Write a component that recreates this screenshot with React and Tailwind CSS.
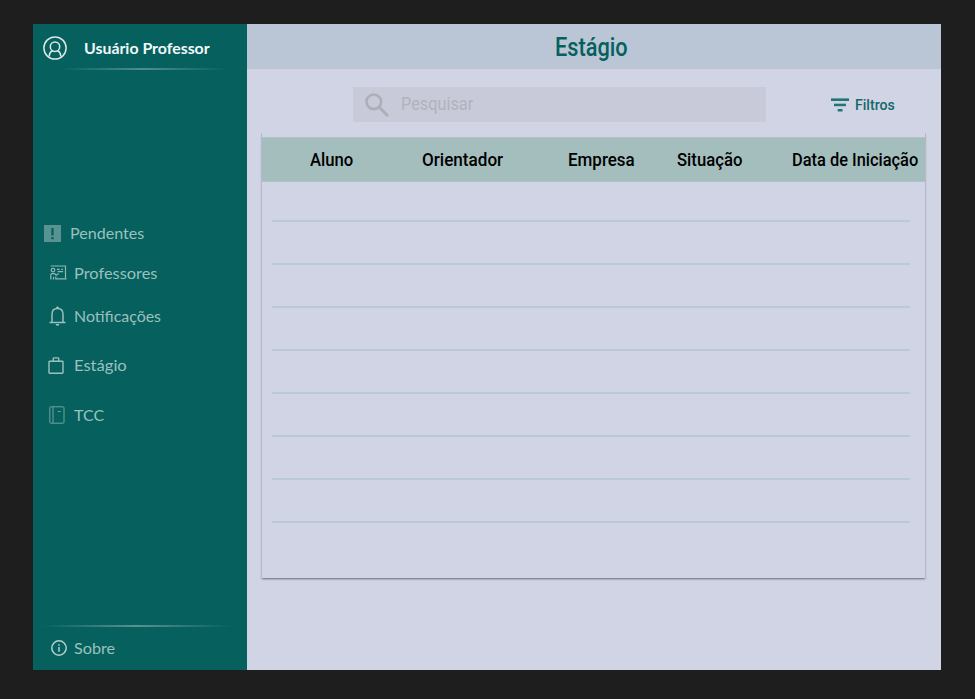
import { useLayoutEffect, useRef, useState } from "react";

// Condenses or expands a label so it fills the width of its box.
function Fit({ children, className = "", textClass = "" }) {
  const box = useRef(null);
  const text = useRef(null);
  const [scale, setScale] = useState(1);
  useLayoutEffect(() => {
    setScale(box.current.clientWidth / text.current.offsetWidth);
  }, []);
  return (
    <span ref={box} className={`block shrink-0 ${className}`}>
      <span
        ref={text}
        className={`inline-block origin-left whitespace-nowrap ${textClass}`}
        style={{ transform: `scaleX(${scale})` }}
      >
        {children}
      </span>
    </span>
  );
}

function UserIcon() {
  return (
    <svg className="h-6 w-6 shrink-0" viewBox="0 0 24 24" fill="none" stroke="#d9e6e5" strokeWidth="1.5">
      <circle cx="12" cy="12" r="11.1" />
      <circle cx="12" cy="10.7" r="4.7" />
      <path d="M6.3 19.6c.2-2.6 1.5-4.2 3.3-4.9M17.7 19.6c-.2-2.6-1.5-4.2-3.3-4.9" strokeLinecap="round" />
    </svg>
  );
}

function AlertIcon() {
  return (
    <svg className="h-[17px] w-[17px]" viewBox="0 0 17 17">
      <rect width="17" height="17" fill="#589391" />
      <path d="M7.3 3h2.3v7.4H7.3zM7.3 12h2.3v2.2H7.3z" fill="#05605e" />
    </svg>
  );
}

function TeacherIcon() {
  return (
    <svg className="h-4 w-[17px]" viewBox="0 0 17 16" fill="none" stroke="#8fb8b6" strokeWidth="1.2">
      <path d="M.8 1h14.7v12.5" />
      <circle cx="3" cy="5.1" r="1.8" />
      <path d="M.8 14.5V10c0-.9.5-1.4 1.4-1.4h2.5l1.5 1.7 2.4-1.7M3.5 14.5v-2.6M5.8 11.5v2.3h10.8M7 4.3h2.7M11.3 4.3h1.8M7.7 6.7h5.4" />
    </svg>
  );
}

function BellIcon() {
  return (
    <svg className="h-5 w-[17px]" viewBox="0 0 17 20" fill="none" stroke="#9bc0be" strokeWidth="1.5">
      <path d="M.5 16.5h16M3 16.3V8.2C3 4.7 5.2 2.5 8.5 2.5S14 4.7 14 8.2v8.1" />
      <path d="M7.3 2.2V1.3c0-1 2.4-1 2.4 0v.9z" fill="#9bc0be" stroke="none" />
      <path d="M6.7 18h3.6c0 2.4-3.6 2.4-3.6 0z" fill="#9bc0be" stroke="none" />
    </svg>
  );
}

function BagIcon() {
  return (
    <svg className="h-[17px] w-4" viewBox="0 0 16 17" fill="none" stroke="#9bc0be" strokeWidth="1.4">
      <rect x="1" y="4.2" width="14" height="12" rx=".6" />
      <path d="M5.3 4V1.6c0-.5.2-.7.7-.7h4c.5 0 .7.2.7.7V4" />
    </svg>
  );
}

function BookIcon() {
  return (
    <svg className="h-[18px] w-4" viewBox="0 0 16 18" fill="none" stroke="#6fa3a1" strokeWidth="1">
      <rect x=".8" y=".8" width="14.2" height="16.4" rx="1" />
      <path d="M4 1v16M8.8 5.5h3" />
    </svg>
  );
}

function InfoIcon() {
  return (
    <svg className="h-4 w-4" viewBox="0 0 16 16" fill="none" stroke="#b3cfce" strokeWidth="1.5">
      <circle cx="8" cy="8" r="7.2" />
      <path d="M8 7v4.7M8 4.2v1.6" />
    </svg>
  );
}

function NavItem({ icon, label, className, width }) {
  return (
    <div className={`flex items-center ${className}`}>
      {icon}
      <Fit className={`ml-auto ${width}`} textClass="text-[15px] leading-5">
        {label}
      </Fit>
    </div>
  );
}

const rows = [1, 2, 3, 4, 5, 6, 7, 8];

export default function App() {
  return (
    <div className="h-[699px] w-[975px] bg-[#1e1e1e] pl-[33px] pt-6">
      <div className="flex h-[646px] w-[908px] bg-[#d1d4e5]">
        <aside className="flex w-[214px] flex-col bg-[#05605e] font-['Lato',sans-serif] text-[#9bc0be]">
          <div className="flex h-[44px] items-center pl-[10px] pt-[3px]">
            <UserIcon />
            <Fit className="ml-[17px] w-[126px]" textClass="text-[15.5px] font-bold leading-6 text-[#f2f8f8]">
              Usuário Professor
            </Fit>
          </div>
          <div className="ml-[25px] h-[2px] w-[170px] bg-linear-to-r from-transparent via-[#4f8e8c] to-transparent" />

          <nav className="mt-[153px] flex flex-col">
            <NavItem icon={<AlertIcon />} label="Pendentes" width="w-[74px]" className="ml-[11px] h-5 w-[100px]" />
            <NavItem icon={<TeacherIcon />} label="Professores" width="w-[83px]" className="ml-[17px] mt-5 h-5 w-[107px]" />
            <NavItem icon={<BellIcon />} label="Notificações" width="w-[87px]" className="ml-4 mt-[23px] h-5 w-[112px]" />
            <NavItem icon={<BagIcon />} label="Estágio" width="w-[53px]" className="ml-[15px] mt-[29px] h-5 w-[79px]" />
            <NavItem icon={<BookIcon />} label="TCC" width="w-[30px]" className="ml-4 mt-[30px] h-5 w-[55px]" />
          </nav>

          <div className="mb-3 mt-auto">
            <div className="ml-2 h-[2px] w-[191px] bg-linear-to-r from-transparent via-[#579391] to-transparent" />
            <NavItem icon={<InfoIcon />} label="Sobre" width="w-[41px]" className="ml-[18px] mt-[11px] h-5 w-16" />
          </div>
        </aside>

        <main className="flex w-[694px] flex-col font-['Roboto',sans-serif]">
          <header className="flex h-[45px] justify-center bg-[#bac6d5] pt-[9px]">
            <Fit className="mr-[6px] w-[73px]" textClass="text-[25px] font-medium leading-[30px] text-[#05605e]">
              Estágio
            </Fit>
          </header>

          <div className="mt-[18px] flex h-[35px] items-center pl-[106px]">
            <div className="flex h-[35px] w-[413px] items-center bg-[#c8cad9] pl-3">
              <svg className="h-6 w-6" viewBox="0 0 24 24" fill="none" stroke="#acafb8" strokeWidth="2.6">
                <circle cx="8.8" cy="8.8" r="7.3" />
                <path d="M14 14l9 9" strokeWidth="3" />
              </svg>
              <Fit className="ml-3 w-[72px]" textClass="text-[19px] leading-6 text-[#b0b3bd]">
                Pesquisar
              </Fit>
            </div>
            <button className="ml-[65px] flex items-center">
              <svg className="h-[14px] w-[18px]" viewBox="0 0 18 14" fill="#217574">
                <rect width="18" height="2.6" y=".4" />
                <rect x="3" y="5.7" width="12" height="2.5" />
                <rect x="6.7" y="11" width="4.8" height="2.5" />
              </svg>
              <Fit className="ml-[6px] w-10 text-left" textClass="text-[15.5px] font-medium leading-5 text-[#146867]">
                Filtros
              </Fit>
            </button>
          </div>

          <section className="ml-[14px] mt-[11px] h-[445px] w-[665px] border-x border-[#b6b9ca] pt-1 shadow-[0_2px_2px_-1px_#656775]">
            <div className="flex h-[45px] items-center border-y border-[#aec4c9] bg-[#a4bebe] pl-[48px] text-[19px] font-medium leading-6 text-black">
              <Fit className="w-[43px]">Aluno</Fit>
              <Fit className="ml-[69px] w-[81px]">Orientador</Fit>
              <Fit className="ml-[65px] w-[67px]">Empresa</Fit>
              <Fit className="ml-[42px] w-[65px]">Situação</Fit>
              <Fit className="ml-[50px] w-[126px]">Data de Iniciação</Fit>
            </div>
            <div className="ml-[10px] w-[638px]">
              {rows.map((row) => (
                <div key={row} className="h-[43px] border-b-2 border-[#bbc8d6] first:h-10" />
              ))}
            </div>
          </section>
        </main>
      </div>
    </div>
  );
}
